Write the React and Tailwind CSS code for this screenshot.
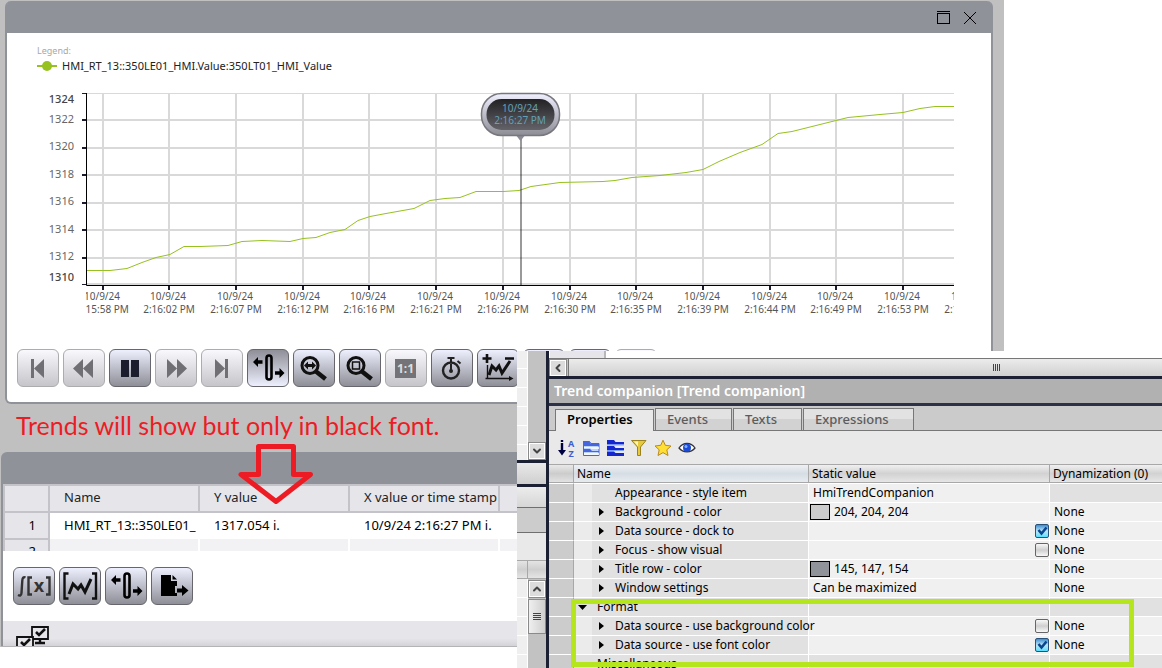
import { ChevronDown, ChevronLeft, ChevronUp } from 'lucide-react';
import { clsx } from 'clsx';

const xTicks = [
  { x: 103, time: '2:15:58 PM' },
  { x: 169, time: '2:16:02 PM' },
  { x: 236, time: '2:16:07 PM' },
  { x: 303, time: '2:16:12 PM' },
  { x: 369, time: '2:16:16 PM' },
  { x: 436, time: '2:16:21 PM' },
  { x: 503, time: '2:16:26 PM' },
  { x: 570, time: '2:16:30 PM' },
  { x: 636, time: '2:16:35 PM' },
  { x: 703, time: '2:16:39 PM' },
  { x: 770, time: '2:16:44 PM' },
  { x: 836, time: '2:16:49 PM' },
  { x: 903, time: '2:16:53 PM' },
  { x: 970, time: '2:16:58 PM' },
];

const yTicks = [
  { y: 93, labelY: 103, value: 1324, bold: true },
  { y: 120, labelY: 123, value: 1322 },
  { y: 148, labelY: 150, value: 1320 },
  { y: 175, labelY: 178, value: 1318 },
  { y: 203, labelY: 205, value: 1316 },
  { y: 230, labelY: 233, value: 1314 },
  { y: 258, labelY: 260, value: 1312 },
  { y: 284, labelY: 281, value: 1310, bold: true },
];

const trend =
  '87,270 110,270 127,268 142,262 156,257 170,254 184,246 200,246 228,245 242,241 262,240 290,241 303,238 316,237 330,232 345,229 358,220 370,216 386,213 414,208 430,200 445,198 460,197 476,191 503,191 519,190 531,186 560,182 603,181 615,180 632,177 660,175 686,172 703,169 719,161 740,152 762,144 778,133 792,131 820,124 848,117 880,114 903,112 920,108 935,106 954,106';

const properties = [
  { name: 'Appearance - style item', value: 'HmiTrendCompanion', leaf: true },
  { name: 'Background - color', value: '204, 204, 204', swatch: 'bg-[#cccccc]', dyn: 'None' },
  { name: 'Data source - dock to', checked: true, dyn: 'None' },
  { name: 'Focus - show visual', checked: false, dyn: 'None' },
  { name: 'Title row - color', value: '145, 147, 154', swatch: 'bg-[#91939a]', dyn: 'None' },
  { name: 'Window settings', value: 'Can be maximized', dyn: 'None' },
  { name: 'Format', group: true },
  { name: 'Data source - use background color', checked: false, dyn: 'None' },
  { name: 'Data source - use font color', checked: true, dyn: 'None' },
  { name: 'Miscellaneous', group: true },
];

function ToolButton({ label, variant = 'normal', children }) {
  return (
    <button
      type="button"
      aria-label={label}
      className={clsx(
        'h-[38px] w-[42px] shrink-0 rounded-md border bg-linear-to-b',
        variant === 'normal' && 'border-[#66666c] from-[#eef0ff] to-[#8e8f97]',
        variant === 'disabled' && 'border-[#acacae] from-[#f8f8fd] to-[#c6c6ca]',
        variant === 'pressed' && 'border-[#66666c] from-[#8e8f97] to-[#eef0ff]',
      )}
    >
      <svg viewBox="1 1 40 36" className="block h-9 w-10">{children}</svg>
    </button>
  );
}

function RulerGlyph() {
  return (
    <>
      <rect x="19.5" y="6.5" width="5" height="24" rx="2.5" fill="none" stroke="#000" strokeWidth="2.6" />
      <path d="M6 13l5-5v3.3h4.5v3.4H11V18zM37.500 24l-5-5v3.300H28v3.400h4.500V29z" fill="#000" />
    </>
  );
}

function Lens({ children }) {
  return (
    <>
      <circle cx="17" cy="16.500" r="8" fill="none" stroke="#111" strokeWidth="3" />
      <path d="M23 22.500l9.500 7.500" stroke="#111" strokeWidth="4.500" />
      {children}
    </>
  );
}

function TrendChart() {
  return (
    <svg viewBox="7 82 984 240" width="984" height="240" className="block font-['Noto_Sans',sans-serif]">
      <defs>
        <clipPath id="plot"><rect x="86" y="88" width="868" height="230" /></clipPath>
        <linearGradient id="bubbleRim" x1="0" y1="0" x2="0" y2="1">
          <stop offset="0" stopColor="#f0f0ff" />
          <stop offset="1" stopColor="#8b8c94" />
        </linearGradient>
        <linearGradient id="bubbleFace" x1="0" y1="0" x2="0" y2="1">
          <stop offset="0" stopColor="#222224" />
          <stop offset="1" stopColor="#626268" />
        </linearGradient>
      </defs>
      <g clipPath="url(#plot)">
        {yTicks.map((t) => (
          <rect key={t.value} x="87" y={t.value === 1324 ? 93 : t.y - 1} width="867" height={t.value === 1324 ? 1 : 2} fill="#d9d9d9" />
        ))}
        {xTicks.map((t) => (
          <g key={t.x}>
            <rect x={t.x - 1} y="93" width="2" height="192" fill="#d9d9d9" />
            <rect x={t.x - 1} y="286" width="2" height="4" fill="#1b1d2e" />
            <text x={t.x - 1} y="300" textAnchor="middle" fontSize="10" fill="#555">10/9/24</text>
            <text x={t.x} y="313" textAnchor="middle" fontSize="10" fill="#555">{t.time}</text>
          </g>
        ))}
        <polyline points={trend} fill="none" stroke="#97c11f" strokeWidth="1" transform="translate(0 .5)" />
      </g>
      {yTicks.map((t) => (
        <g key={t.value}>
          <rect x="82" y={t.bold ? t.y : t.y - 1} width="4" height={t.bold ? 1 : 2} fill="#1b1d2e" />
          <text x="74" y={t.labelY} textAnchor="end" fontSize="11" fill={t.bold ? '#444' : '#666'} fontWeight={t.bold ? 500 : 400}>{t.value}</text>
        </g>
      ))}
      <path d="M86.500 93v192.500H954" fill="none" stroke="#000" />
      <rect x="520" y="135" width="2" height="150" fill="#000" opacity=".4" />
      <path d="M515 134h11l-5.500 7z" fill="#8b8c94" />
      <rect x="481.500" y="93.500" width="78" height="42" rx="20" fill="url(#bubbleRim)" stroke="#77777d" strokeWidth="1.500" />
      <rect x="486.500" y="99" width="68" height="31" rx="15" fill="url(#bubbleFace)" />
      <text x="520" y="112" textAnchor="middle" fontSize="10" fill="#64a0b8">10/9/24</text>
      <text x="520" y="124" textAnchor="middle" fontSize="10" fill="#64a0b8">2:16:27 PM</text>
    </svg>
  );
}

function TrendWindow() {
  return (
    <section className="ml-[5px] w-[988px] rounded-md border-2 border-t-0 border-[#90929a] bg-white font-['Noto_Sans',sans-serif]">
      <header className="flex h-8 items-center justify-end gap-[11px] rounded-t-sm bg-[#90929a] pr-[13px]">
        <button type="button" aria-label="Maximize">
          <svg viewBox="0 0 16 16" className="size-4" fill="none" stroke="#000" shapeRendering="crispEdges">
            <path d="M2 2.500h13M2.500 4.500h12v10h-12z" />
          </svg>
        </button>
        <button type="button" aria-label="Close">
          <svg viewBox="0 0 16 16" className="size-4" stroke="#000">
            <path d="M2 3l12 12M14 3L2 15" />
          </svg>
        </button>
      </header>
      <div className="flex h-[49px] flex-col pl-[30px] pt-3">
        <span className="text-[9px] leading-3 text-[#a8a8a8]">Legend:</span>
        <div className="flex items-center gap-[5px] pt-px">
          <svg viewBox="0 0 20 10" className="h-2.5 w-5"><path d="M0 5h20" stroke="#97c11f" strokeWidth="2" /><circle cx="10" cy="5" r="5" fill="#97c11f" /></svg>
          <span className="text-[11px] leading-4 text-[#222]">HMI_RT_13::350LE01_HMI.Value:350LT01_HMI_Value</span>
        </div>
      </div>
      <TrendChart />
      <div className="flex gap-1 pb-[15px] pl-2.5 pt-[27px]">
        <ToolButton label="First" variant="disabled"><path d="M14 10h3v19h-3zM17 19.500L27 10v19z" fill="#707074" /></ToolButton>
        <ToolButton label="Rewind" variant="disabled"><path d="M10 19.500L20 10v19zM20 19.500L30 10v19z" fill="#707074" /></ToolButton>
        <ToolButton label="Pause"><path d="M12 11h8v17h-8zM22 11h8v17h-8z" fill="#1b1d2e" /></ToolButton>
        <ToolButton label="Forward" variant="disabled"><path d="M22 19.500L12 10v19zM32 19.500L22 10v19z" fill="#707074" /></ToolButton>
        <ToolButton label="Last" variant="disabled"><path d="M24 10h3v19h-3zM24 19.500L14 10v19z" fill="#707074" /></ToolButton>
        <ToolButton label="Ruler" variant="pressed"><RulerGlyph /></ToolButton>
        <ToolButton label="Zoom time">
          <Lens><path d="M11 16.500l4-4v2.500h4v-2.500l4 4-4 4v-2.500h-4v2.500z" fill="#111" /></Lens>
        </ToolButton>
        <ToolButton label="Zoom area">
          <Lens><rect x="13.500" y="13" width="7" height="7" fill="none" stroke="#111" strokeWidth="1.500" /></Lens>
        </ToolButton>
        <ToolButton label="Original size" variant="disabled">
          <rect x="10" y="10" width="21" height="19" fill="#747478" />
          <text x="20.500" y="24" textAnchor="middle" fontSize="12" fontWeight="700" fill="#ddd">1:1</text>
        </ToolButton>
        <ToolButton label="Time range">
          <circle cx="20" cy="21.500" r="8" fill="none" stroke="#222" strokeWidth="2.400" />
          <path d="M16.500 9h7M20 9v4M26.500 12l3 2.500M20 15v6" stroke="#222" strokeWidth="2" />
          <circle cx="20" cy="22" r="2" fill="#222" />
        </ToolButton>
        <ToolButton label="Trend settings">
          <path d="M5.500 9.500h9M10 5v9M28 9.500h9" stroke="#111" strokeWidth="2.600" />
          <path d="M10.500 16v13.500H33M8.500 29.500h2" fill="none" stroke="#111" strokeWidth="1.400" />
          <path d="M36.500 29.500L32 27v5z" fill="#111" />
          <path d="M12 26l3-9 4 4 3-4 3 7 8-12" fill="none" stroke="#111" strokeWidth="3" />
        </ToolButton>
        <ToolButton label="Print" />
        <ToolButton label="Export" />
        <ToolButton label="Connect" variant="disabled" />
      </div>
    </section>
  );
}

function CompanionWindow() {
  return (
    <section className="ml-px border-b border-[#b4b4b8] bg-[#90929a] pl-0.5 font-['Noto_Sans',sans-serif] rounded-tl-md">
      <header className="h-8" />
      <div className="h-[67px] overflow-hidden bg-white">
        <table className="w-full table-fixed border-collapse text-[13px] leading-4 text-[#222]">
          <colgroup>
            <col className="w-[45px]" />
            <col className="w-[150px]" />
            <col className="w-[150px]" />
            <col className="w-[150px]" />
            <col />
          </colgroup>
          <thead>
            <tr className="h-[27px] bg-[#e6e5ea] text-left">
              <th className="border-2 border-[#c4c3c9] p-0" />
              <th className="border-2 border-[#c4c3c9] p-0 pb-1 pl-3.5 font-normal">Name</th>
              <th className="border-2 border-[#c4c3c9] p-0 pb-1 pl-3.5 font-normal">Y value</th>
              <th className="border-2 border-[#c4c3c9] p-0 pb-1 pl-3.5 font-normal whitespace-nowrap">X value or time stamp</th>
              <th className="border-2 border-r-0 border-[#c4c3c9] p-0" />
            </tr>
          </thead>
          <tbody>
            <tr className="h-[27px] text-black">
              <td className="border-2 border-[#c4c3c9] bg-[#e6e5ea] p-0 pr-3 pb-0.5 text-right">1</td>
              <td className="overflow-hidden p-0 pb-0.5 pl-3.5 whitespace-nowrap">HMI_RT_13::350LE01_</td>
              <td className="p-0 pb-0.5 pl-[15px]">1317.054 i.</td>
              <td className="p-0 pb-0.5 pl-[15px] whitespace-nowrap">10/9/24 2:16:27 PM i.</td>
              <td />
            </tr>
            <tr className="h-[27px] text-black">
              <td className="border-2 border-[#c4c3c9] bg-[#e6e5ea] p-0 pr-3 pb-1 text-right">2</td>
              <td className="border-r-2 border-white bg-[#f2f1f4]" />
              <td className="border-r-2 border-white bg-[#f2f1f4]" />
              <td className="border-r-2 border-white bg-[#f2f1f4]" />
              <td className="bg-[#f2f1f4]" />
            </tr>
          </tbody>
        </table>
      </div>
      <div className="flex gap-1 bg-white pb-4 pl-2.5 pt-4">
        <ToolButton label="Statistics">
          <path d="M12.500 10.500c-2-1-3 .5-3.200 3L8.500 26c-.2 2.500-1.500 3-3.500 2" fill="none" stroke="#333" strokeWidth="2.400" />
          <path d="M19 10.500h-3.500v17H19M33 10.500h3.500v17H33" fill="none" stroke="#333" strokeWidth="2.400" />
          <text x="26" y="25" textAnchor="middle" fontSize="18" fontWeight="700" fill="#333">x</text>
        </ToolButton>
        <ToolButton label="Statistics area">
          <path d="M9.500 6.500h-4v25h4M33 6.500h4v25h-4" fill="none" stroke="#111" strokeWidth="2.400" />
          <path d="M10 27l4-10 5 5 3-4 4 7 6-13" fill="none" stroke="#111" strokeWidth="3" />
        </ToolButton>
        <ToolButton label="Ruler"><RulerGlyph /></ToolButton>
        <ToolButton label="Export">
          <path d="M10 8h10v6h6v5h-2v7h2v3H10zM21.500 8l4.500 4.500h-4.500z" fill="#000" />
          <path d="M26 21.500h5V18l6.500 5.500-6.500 5.500v-3.500h-5z" fill="#000" />
        </ToolButton>
      </div>
      <footer className="h-[25px] overflow-hidden bg-linear-to-b from-[#e6e5ea] from-70% to-[#d4d3d8] pl-3 pt-1">
        <svg viewBox="0 0 36 24" className="h-6 w-9" fill="none" stroke="#111" strokeWidth="1.800">
          <path d="M17 2h16v12H17z" fill="#e6e5ea" />
          <path d="M25 14v3M20 18h10" strokeWidth="2.400" />
          <path d="M21 7l3 3 6-6" strokeWidth="2.600" />
          <path d="M2 12h16v12H2z" fill="#e6e5ea" />
          <path d="M6 17l3 3 6-6" strokeWidth="2.600" />
        </svg>
      </footer>
    </section>
  );
}

function ScrollButton({ label, children }) {
  return (
    <button type="button" aria-label={label} className="flex size-[18px] shrink-0 items-center justify-center border border-[#8a8a8a] bg-[#dcdcdc] text-[#444] outline-1 -outline-offset-2 outline-white">
      {children}
    </button>
  );
}

function EditorEdge() {
  return (
    <div className="flex w-8 shrink-0 flex-col border-r-3 border-[#1b2032] bg-[#e9e9e9]">
      <div className="flex h-[109px]">
        <div className="w-[11px] border-r border-white bg-[repeating-linear-gradient(#efefef_0_17px,#fff_17px_18px,#efefef_18px_19px)]" />
        <div className="flex flex-1 flex-col justify-end bg-[#c2c2c2]">
          <ScrollButton label="Scroll down"><ChevronDown size={12} strokeWidth={4} /></ScrollButton>
        </div>
      </div>
      <div className="h-[27px] border-y-3 border-[#1b2032] bg-linear-to-b from-[#e9e9e9] to-[#cfcfcf]" />
      <div className="h-[21px] border-b border-[#6f6f6f] bg-linear-to-b from-[#ececec] to-[#d6d6d6]" />
      <div className="h-[25px] border-b border-[#6f6f6f] bg-[#cccccc]" />
      <div className="h-[27px]" />
      <div className="flex h-[19px] border-y border-[#a8a8a8] bg-linear-to-b from-[#e4e4e4] via-[#cfcfcf] to-[#e4e4e4]">
        <div className="w-[11px] border-r border-[#a8a8a8]" />
      </div>
      <div className="flex min-h-0 flex-1">
        <div className="w-[11px] border-r border-white bg-[repeating-linear-gradient(#efefef_0_18px,#fff_18px_19px)]" />
        <div className="flex flex-1 flex-col gap-px bg-[#c2c2c2] pt-px">
          <ScrollButton label="Scroll up"><ChevronUp size={12} strokeWidth={4} /></ScrollButton>
          <div className="flex h-[35px] flex-col items-center justify-center gap-px border border-[#8a8a8a] bg-linear-to-r from-[#efefef] to-[#cfcfcf]">
            <i className="h-px w-2 bg-[#444]" />
            <i className="h-px w-2 bg-[#444]" />
            <i className="h-px w-2 bg-[#444]" />
            <i className="h-px w-2 bg-[#444]" />
          </div>
        </div>
      </div>
    </div>
  );
}

function PropertyCheckbox({ name, checked }) {
  return (
    <span className="relative block size-3.5">
      <input
        type="checkbox"
        aria-label={name}
        defaultChecked={checked}
        className="peer block size-3.5 appearance-none rounded-xs border border-[#666] bg-linear-to-b from-[#f8f8f8] via-[#cfcfcf] to-[#f8f8f8] checked:border-[#29527a] checked:from-[#3b8fd0] checked:via-[#bde4f5] checked:to-[#4fe0ff]"
      />
      <svg viewBox="0 0 14 14" className="pointer-events-none absolute inset-0 hidden size-3.5 peer-checked:block">
        <path d="M3.500 6l3 3.500 5-6" fill="none" stroke="#0a4590" strokeWidth="2.600" />
      </svg>
    </span>
  );
}

function PropertyRow({ item }) {
  const valueBg = item.group ? 'bg-[#e1e1e1]' : 'bg-[#f0f0f0]';
  return (
    <tr className="h-[19px]">
      <td className="border-t border-r border-t-white border-r-[#a8a8a8] bg-[#cccccc] p-0" />
      <td className="border-t border-r border-white bg-[#e1e1e1] p-0">
        {item.group ? (
          <div className="flex h-[18px] items-center gap-2.5 pl-1">
            <svg viewBox="0 0 9 5" className="h-[5px] w-[9px]"><path d="M0 0h9L4.500 5z" /></svg>
            {item.name}
          </div>
        ) : (
          <div className="flex h-[18px] items-center whitespace-nowrap">
            <span className="h-full w-[18px] shrink-0 bg-[#ebebeb]" />
            <span className="flex w-[23px] shrink-0 pl-[7px]">
              {!item.leaf && <svg viewBox="0 0 5 8" className="h-2 w-[5px]"><path d="M0 0l5 4-5 4z" /></svg>}
            </span>
            {item.name}
          </div>
        )}
      </td>
      <td className={clsx('border-t border-r border-white p-0', valueBg)}>
        <div className="flex h-[18px] items-center gap-1">
          {item.swatch && <span className={clsx('ml-px h-4 w-5 border border-black', item.swatch)} />}
          {item.value && <span className={clsx(!item.swatch && 'pl-1')}>{item.value}</span>}
          {item.checked !== undefined && <div className="ml-auto"><PropertyCheckbox name={item.name} checked={item.checked} /></div>}
        </div>
      </td>
      <td className={clsx('border-t border-white p-0 pl-1', item.dyn ? 'bg-[#f0f0f0]' : 'bg-[#e1e1e1]')}>{item.dyn}</td>
    </tr>
  );
}

function InspectorToolbar() {
  const button = 'flex h-[18px] w-[18px] items-center justify-center';
  return (
    <div className="flex h-[33px] shrink-0 items-center gap-1.5 bg-[#e9e9e9] pl-[9px]">
      <button type="button" aria-label="Sort" className={button}>
        <svg viewBox="0 0 18 18" className="size-[18px] overflow-visible font-bold">
          <path d="M4 1v2M4 4v8" stroke="#000040" strokeWidth="2.400" />
          <path d="M0 11h8l-4 5.500z" fill="#000040" />
          <text x="13" y="8" textAnchor="middle" fontSize="9" fill="#3a5fd0">A</text>
          <text x="13" y="18" textAnchor="middle" fontSize="9" fill="#3a5fd0">Z</text>
        </svg>
      </button>
      <button type="button" aria-label="Categories" className={button}>
        <svg viewBox="0 0 18 18" className="size-[18px]">
          <path d="M1.500 2.500h6l1.500 2h8v12h-15.500z" fill="#bcd2ff" stroke="#4766dd" />
          <path d="M1 2h6l2 3h8v2H1zM2 10h6l2 2h7v1H2z" fill="#4766dd" />
          <path d="M2 8h15v2H9L8 9H2zM2 14h15v2H2z" fill="#fff" opacity=".8" />
        </svg>
      </button>
      <button type="button" aria-label="List" className={button}>
        <svg viewBox="0 0 18 18" className="size-[18px]" fill="#1426d0">
          <path d="M1 1h7l1.500 2H18v2.500H1zM1 7h7l1.500 2H18v2H1zM1 12.500h7l1.500 1.500H18v3H1z" />
          <path d="M1 6h17M1 11.500h17" stroke="#7da4ff" />
        </svg>
      </button>
      <button type="button" aria-label="Filter" className={button}>
        <svg viewBox="0 0 18 18" className="size-[18px]">
          <path d="M1.500 1.500h14.500L10.500 8v8.500h-3V8z" fill="#e6c93c" stroke="#9a8220" />
          <path d="M4 2.500h4v5z" fill="#fff6b8" />
        </svg>
      </button>
      <button type="button" aria-label="Favorites" className={button}>
        <svg viewBox="0 0 18 18" className="size-[18px]">
          <path d="M9 1.200l2.300 5.100 5.700.7-4.200 3.800 1.200 5.700-5-2.900-5 2.900 1.200-5.700L1 7l5.700-.7z" fill="#ffdf33" stroke="#b98a1c" />
        </svg>
      </button>
      <button type="button" aria-label="Visibility" className={button}>
        <svg viewBox="0 0 18 18" className="size-[18px]">
          <path d="M1 9c4-6 12-6 16 0-4 5-12 5-16 0z" fill="#fff" stroke="#33333f" strokeWidth="1.300" />
          <circle cx="9" cy="8.700" r="4" fill="#1c4bd6" />
          <circle cx="8" cy="7.500" r="1.500" fill="#7fb0ff" />
        </svg>
      </button>
    </div>
  );
}

const tabClass = 'h-[22px] border border-b-0 border-[#777] bg-linear-to-b from-[#e2e2e2] from-50% to-[#d2d2d2] to-50% pl-[11px] pb-0.5 text-left font-medium text-[#5c5c5c]';

function Inspector() {
  return (
    <section className="flex min-w-0 flex-1 flex-col overflow-hidden bg-[#e9e9e9] font-['Noto_Sans',sans-serif] text-[12px] leading-4 text-black">
      <div className="flex h-[7px] shrink-0 bg-white"><div className="ml-px w-14 border-r-2 border-[#b8b8bc] bg-[#e6e5ea]" /></div>
      <div className="flex h-[18px] shrink-0 gap-px border-t border-[#777] bg-[#c2c2c2]">
        <ScrollButton label="Scroll left"><ChevronLeft size={12} strokeWidth={4} /></ScrollButton>
        <div className="flex flex-1 items-center border-l border-[#777] bg-linear-to-b from-[#ececec] to-[#d0d0d0] pl-[424px]">
          <div className="flex gap-px">
            <i className="h-[7px] w-px bg-[#444]" />
            <i className="h-[7px] w-px bg-[#444]" />
            <i className="h-[7px] w-px bg-[#444]" />
            <i className="h-[7px] w-px bg-[#444]" />
          </div>
        </div>
      </div>
      <h2 className="flex h-[30px] shrink-0 items-center border-y-3 border-t-[#1b2032] border-b-[#2d3148] bg-[#b1b1b1] pl-[5px] text-[14px] font-semibold text-white">Trend companion [Trend companion]</h2>
      <div className="flex h-[25px] shrink-0 items-end bg-[#cbcbcb] text-[13px]" role="tablist">
        <div className="w-1.5 self-stretch border-b border-[#777]" />
        <button type="button" role="tab" aria-selected="true" className="h-[22px] w-[99px] border border-b-0 border-[#777] bg-[#e9e9e9] pb-[3px] pl-[11px] text-left font-semibold text-black">Properties</button>
        <div className="flex flex-1 gap-px border-b border-[#777] pl-px">
          <button type="button" role="tab" aria-selected="false" className={clsx(tabClass, 'w-[77px]')}>Events</button>
          <button type="button" role="tab" aria-selected="false" className={clsx(tabClass, 'w-[69px]')}>Texts</button>
          <button type="button" role="tab" aria-selected="false" className={clsx(tabClass, 'w-[111px] border-r')}>Expressions</button>
        </div>
      </div>
      <InspectorToolbar />
      <table className="w-full table-fixed border-separate border-spacing-0">
        <colgroup>
          <col className="w-[25px]" />
          <col className="w-[235px]" />
          <col className="w-[241px]" />
          <col />
        </colgroup>
        <thead>
          <tr className="h-[19px] text-left">
            <th className="border-y border-r border-[#a8a8a8] bg-linear-to-b from-[#e9e9e9] via-[#cccccc] to-[#e2e2e2] p-0" />
            <th className="border-y border-r border-[#a8a8a8] bg-linear-to-b from-[#eef1f4] via-[#d6dde4] to-[#e6ebef] p-0 pl-[3px] font-normal">Name</th>
            <th className="border-y border-r border-[#a8a8a8] bg-linear-to-b from-[#f0f0f0] via-[#d2d2d2] to-[#e6e6e6] p-0 pl-[3px] font-normal">Static value</th>
            <th className="border-y border-[#a8a8a8] bg-linear-to-b from-[#f0f0f0] via-[#d2d2d2] to-[#e6e6e6] p-0 pl-[3px] font-normal">Dynamization (0)</th>
          </tr>
        </thead>
        <tbody>
          {properties.map((item) => <PropertyRow key={item.name} item={item} />)}
        </tbody>
      </table>
    </section>
  );
}

export default function App() {
  return (
    <main className="relative min-h-screen overflow-hidden bg-white">
      <div className="w-[1004px] bg-[#c0c0c0] pt-px">
        <TrendWindow />
        <p className="pt-1 pb-2.5 pl-4 font-['Lato',sans-serif] text-[25px] leading-[34px] text-[#ed1c24]">Trends will show but only in black font.</p>
        <CompanionWindow />
      </div>
      <svg viewBox="0 0 76 62" className="absolute left-[238px] top-[443px] h-[62px] w-[76px]">
        <path d="M20.500 3.500h35v28h17L38 58.500 3 31.500h17.500z" fill="none" stroke="#ed1c24" strokeWidth="5" strokeLinejoin="round" />
      </svg>
      <div className="absolute top-[351px] right-0 bottom-0 left-[517px] flex overflow-hidden">
        <EditorEdge />
        <Inspector />
      </div>
      <div className="pointer-events-none absolute top-[599px] right-7 left-[571px] h-[68px] border-5 border-[#b5e61d]" />
    </main>
  );
}
